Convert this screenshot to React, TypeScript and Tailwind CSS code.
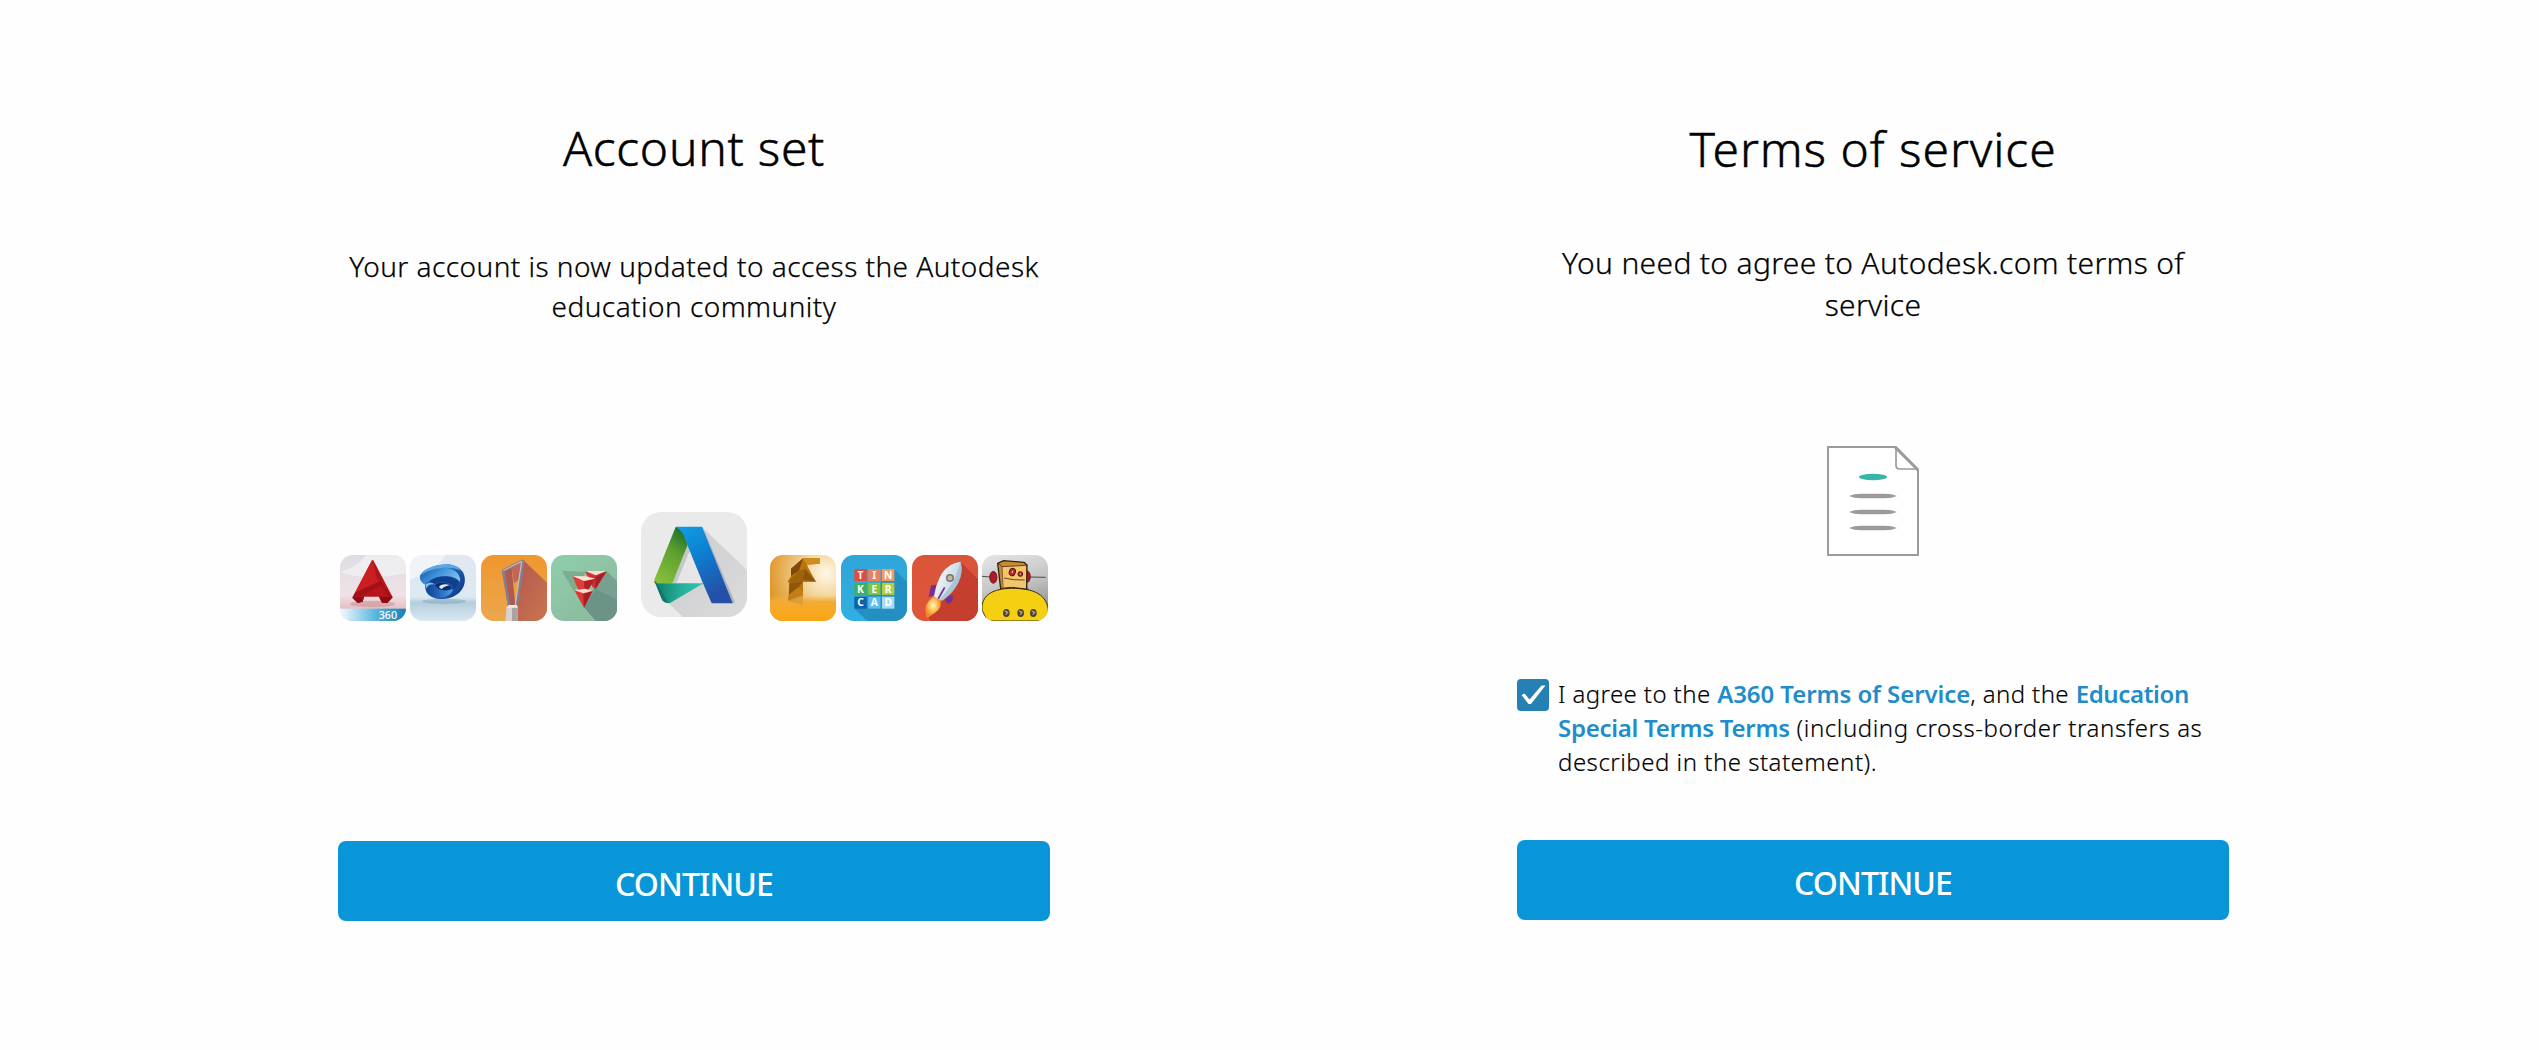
import type { ReactNode } from "react";

function Tile({ id, x, children }: { id: string; x: number; children: ReactNode }) {
  return (
    <svg className="h-[66px] w-[66px] shrink-0" viewBox={`${x} 165 198 198`} aria-hidden="true">
      <clipPath id={`${id}-clip`}>
        <rect x={x} y="165" width="198" height="198" rx="38" />
      </clipPath>
      <g clipPath={`url(#${id}-clip)`}>{children}</g>
    </svg>
  );
}

function Autocad360() {
  return (
    <Tile id="acad" x={31}>
      <defs>
        <linearGradient id="acad-bg" x1="0" y1="0" x2="0" y2="1">
          <stop offset="0" stopColor="#dddde4" />
          <stop offset="0.6" stopColor="#f0e2e6" />
          <stop offset="0.85" stopColor="#e3b9bf" />
        </linearGradient>
        <linearGradient id="acad-bar" x1="0" x2="1">
          <stop offset="0" stopColor="#f4fafd" />
          <stop offset="0.55" stopColor="#55b5dc" />
          <stop offset="1" stopColor="#1580b8" />
        </linearGradient>
      </defs>
      <rect x="31" y="165" width="198" height="198" fill="url(#acad-bg)" />
      <path d="M31 215Q100 245 229 220V165H110Q80 205 31 215Z" fill="#f6f6f9" opacity=".6" />
      <ellipse cx="129" cy="312" rx="68" ry="10" fill="#c9848c" opacity=".5" />
      <path d="M127 181L68 293L84 309L99 305L103 290H148L157 308L173 309L189 292L131 181Z" fill="#b8141b" />
      <path d="M127 181L76 278L153 243L129 181Z" fill="#c91f22" />
      <path d="M153 243L76 278L68 293L100 286L158 254Z" fill="#a50f17" />
      <path d="M68 293L84 309L99 305L103 290ZM148 290L157 308L173 309L189 292Z" fill="#8d0b12" />
      <path d="M129 181L153 243L189 292L175 291L140 230Z" fill="#9c0f16" opacity=".6" />
      <rect x="31" y="326" width="198" height="37" fill="url(#acad-bar)" />
      <text x="147" y="356" fontSize="31" fontFamily="Noto Sans, sans-serif" fontWeight="500" fill="#fff" textLength="55" lengthAdjust="spacingAndGlyphs">360</text>
    </Tile>
  );
}

function Swirl() {
  return (
    <Tile id="swirl" x={243}>
      <defs>
        <linearGradient id="swirl-bg" x1="0" y1="0" x2="0" y2="1">
          <stop offset="0" stopColor="#e2e7f0" />
          <stop offset="0.64" stopColor="#dce9f3" />
          <stop offset="0.72" stopColor="#b5cedd" />
          <stop offset="1" stopColor="#d9e8f1" />
        </linearGradient>
        <linearGradient id="swirl-rim" x1="0" y1="0" x2="1" y2="0.6">
          <stop offset="0" stopColor="#2f7fd0" />
          <stop offset="0.5" stopColor="#2a6fc2" />
          <stop offset="1" stopColor="#123f8c" />
        </linearGradient>
        <linearGradient id="swirl-lobe" x1="0" x2="1">
          <stop offset="0" stopColor="#0f3f8e" />
          <stop offset="0.5" stopColor="#2468bd" />
          <stop offset="1" stopColor="#4f9de0" />
        </linearGradient>
        <linearGradient id="swirl-in" x1="0" y1="0" x2="1" y2="0.5">
          <stop offset="0" stopColor="#15509f" />
          <stop offset="0.5" stopColor="#3f92dc" />
          <stop offset="1" stopColor="#7dc0ef" />
        </linearGradient>
      </defs>
      <rect x="243" y="165" width="198" height="198" fill="url(#swirl-bg)" />
      <path d="M243 165H350Q320 210 243 240Z" fill="#fff" opacity=".5" />
      <ellipse cx="345" cy="304" rx="66" ry="8" fill="#7fa5c0" opacity=".5" />
      <path d="M274 226C286 202 330 192 360 193C394 198 412 220 407 248C402 280 366 299 334 297C304 295 286 280 289 254C276 247 271 237 274 226Z" fill="url(#swirl-rim)" />
      <path d="M274 226C290 204 332 198 364 206C386 213 396 230 393 246C378 228 346 224 318 233C304 237 294 244 289 254C276 247 271 237 274 226Z" fill="url(#swirl-in)" />
      <path d="M274 226C286 202 330 192 360 193C376 195 390 202 398 212C364 196 308 202 274 226Z" fill="#5aa8e6" />
      <path d="M302 243C326 226 362 226 384 240C390 250 384 262 372 268C376 250 346 240 318 252C312 250 306 248 302 243Z" fill="#103f8b" />
      <path d="M289 254C296 244 314 244 324 258C328 268 346 274 372 268C368 286 344 296 326 294C302 292 288 276 289 254Z" fill="url(#swirl-lobe)" />
      <path d="M318 256C328 246 352 246 364 257C368 263 364 269 354 271C338 272 326 268 318 256Z" fill="#0a2f70" />
      <path d="M330 260C338 252 352 251 362 256C352 257 344 261 338 267C334 265 331 263 330 260Z" fill="#dcecf9" />
      <path d="M289 254C296 246 310 246 319 254C308 251 296 254 292 266Z" fill="#7dbdf0" />
    </Tile>
  );
}

function Loop() {
  return (
    <Tile id="loop" x={453}>
      <defs>
        <linearGradient id="loop-bg" x1="0" y1="0" x2="0" y2="1">
          <stop offset="0" stopColor="#f0972f" />
          <stop offset="1" stopColor="#eba74e" />
        </linearGradient>
        <linearGradient id="loop-sh" x1="0" y1="0" x2="1" y2="1">
          <stop offset="0" stopColor="#b4554e" />
          <stop offset="1" stopColor="#c9764f" />
        </linearGradient>
      </defs>
      <rect x="453" y="165" width="198" height="198" fill="url(#loop-bg)" />
      <path d="M580 180L651 248V363H550L552 310Z" fill="url(#loop-sh)" />
      <path d="M522 213L545 202L560 300L556 330L540 320Z" fill="#ad5b52" />
      <path d="M545 202L576 186L556 318Z" fill="#ee9f3d" />
      <path d="M545 202L552 250L568 238L576 186Z" fill="#c2665a" />
      <path d="M520 211L576 183Q581 182 580 188L559 322H538L520 216Z" fill="none" stroke="#857d88" strokeWidth="8" strokeLinejoin="round" />
      <path d="M519 212L575 184L555 320" fill="none" stroke="#c3bfc6" strokeWidth="3.5" strokeLinejoin="round" />
      <path d="M530 320H563V363H526Z" fill="#d6d2cf" />
      <path d="M546 320H563V363H546Z" fill="#aaa3a3" />
      <path d="M536 315H561L563 323H530Z" fill="#eeeae4" />
    </Tile>
  );
}

function Wedges() {
  return (
    <Tile id="wedge" x={665}>
      <defs>
        <linearGradient id="wedge-bg" x1="0" y1="0" x2="0.8" y2="1">
          <stop offset="0" stopColor="#8fcfab" />
          <stop offset="1" stopColor="#8bb99e" />
        </linearGradient>
      </defs>
      <rect x="665" y="165" width="198" height="198" fill="url(#wedge-bg)" />
      <path d="M832 214L863 244V363H800L763 322L790 270Z" fill="#76a08f" />
      <path d="M697 212L770 216L735 275Z" fill="#7eac93" />
      <path d="M800 268L863 300V363H800L765 322Z" fill="#668b7e" opacity=".6" />
      <path d="M767 213L832 214L800 266L790 262Z" fill="#d5302f" />
      <path d="M799 230L832 214L797 268Z" fill="#a91f25" />
      <path d="M767 213L832 213L799 226Z" fill="#f4dfcd" />
      <path d="M730 229L798 236L765 284L752 282Z" fill="#df3e38" />
      <path d="M764 244L798 236L766 286Z" fill="#ae2127" />
      <path d="M730 228L770 229L798 236L764 243Z" fill="#f7e5d4" />
      <path d="M735 271L790 272L764 323Z" fill="#de3733" />
      <path d="M762 282L790 272L764 323Z" fill="#a81e25" />
      <path d="M735 271L766 266L792 272L762 280Z" fill="#f5decb" />
    </Tile>
  );
}

function AutodeskMark() {
  return (
    <svg className="mr-[23px] mb-1 ml-6 h-[105px] w-[106px] shrink-0" viewBox="64 37 318 315" aria-hidden="true">
      <defs>
        <clipPath id="mark-clip">
          <rect x="64" y="37" width="318" height="315" rx="60" />
        </clipPath>
        <linearGradient id="mark-blue" x1="0" y1="0" x2="0.4" y2="1">
          <stop offset="0" stopColor="#139ee0" />
          <stop offset="0.45" stopColor="#0c80d2" />
          <stop offset="1" stopColor="#2450a8" />
        </linearGradient>
        <linearGradient id="mark-green" x1="0.75" y1="0" x2="0.3" y2="1">
          <stop offset="0" stopColor="#1d6d2f" />
          <stop offset="0.4" stopColor="#5c9f2e" />
          <stop offset="1" stopColor="#84be3a" />
        </linearGradient>
        <linearGradient id="mark-teal" x1="0" x2="1">
          <stop offset="0" stopColor="#117a6a" />
          <stop offset="0.5" stopColor="#22ac98" />
          <stop offset="1" stopColor="#3bc4b5" />
        </linearGradient>
        <linearGradient id="mark-shade" x1="0" y1="0" x2="1" y2="1">
          <stop offset="0" stopColor="#c9cacc" />
          <stop offset="1" stopColor="#dcdcdd" />
        </linearGradient>
      </defs>
      <g clipPath="url(#mark-clip)">
        <rect x="64" y="37" width="318" height="315" fill="#eaeaeb" />
        <path d="M247 83L382 210V352H190L148 312L245 254Z" fill="url(#mark-shade)" />
        <path d="M205 133L246 250H160Z" fill="#e6e6e7" />
        <path d="M205 133L210 155L170 250H158Z" fill="#c6c7c8" />
        <path d="M249 83L346 308L336 312L243 88Z" fill="#aeb4bd" />
        <path d="M168 82H186L204 136L158 251H104V240Z" fill="url(#mark-green)" />
        <path d="M168 81H247L339 311H276Q244 238 204 138Q192 92 168 81Z" fill="url(#mark-blue)" />
        <path d="M104 243L112 251H252L150 311Q132 311 126 298Z" fill="url(#mark-teal)" />
        <path d="M104 243L112 251L146 310Q132 310 126 298Z" fill="#0c6b62" opacity=".6" />
      </g>
    </svg>
  );
}

function Formit() {
  return (
    <Tile id="form" x={61}>
      <defs>
        <radialGradient id="form-bg" cx="0.85" cy="0.28" r="0.95">
          <stop offset="0" stopColor="#fff8e8" />
          <stop offset="0.35" stopColor="#f4d8a0" />
          <stop offset="1" stopColor="#dc8f1c" />
        </radialGradient>
        <linearGradient id="form-floor" x1="0" y1="0" x2="0" y2="1">
          <stop offset="0" stopColor="#f5b645" stopOpacity="0" />
          <stop offset="0.25" stopColor="#f2ab32" />
          <stop offset="1" stopColor="#fba614" />
        </linearGradient>
      </defs>
      <rect x="61" y="165" width="198" height="198" fill="url(#form-bg)" />
      <rect x="61" y="286" width="198" height="77" fill="url(#form-floor)" />
      <path d="M160 175L124 206V228L114 246L119 248L116 302L160 313V246L199 245L176 204L172 194L210 191V174Z" fill="#b87511" />
      <path d="M160 175L124 206V228L148 212Z" fill="#7c4b08" />
      <path d="M160 175L210 174V191L172 194Z" fill="#d08e1f" />
      <path d="M148 212L114 246H160L166 206Z" fill="#a0620b" />
      <path d="M166 206L160 240L199 245Z" fill="#8d550a" />
      <path d="M160 246L119 248L118 284L146 262Z" fill="#8f5809" />
      <path d="M118 284L146 262L160 276V292L116 302Z" fill="#c47e17" />
      <path d="M116 302L160 286V313Z" fill="#dc9e3c" />
    </Tile>
  );
}

const tinker: [string, string][] = [
  ["T", "#e14b40"],
  ["I", "#ee7f5c"],
  ["N", "#f29a62"],
  ["K", "#3fae5f"],
  ["E", "#84c441"],
  ["R", "#b3cf3f"],
  ["C", "#0d62ae"],
  ["A", "#5ebdec"],
  ["D", "#a5dcf5"],
];

function Tinkercad() {
  return (
    <Tile id="tink" x={273}>
      <defs>
        <linearGradient id="tink-bg" x1="0" y1="0" x2="0" y2="1">
          <stop offset="0" stopColor="#2fa5d8" />
          <stop offset="1" stopColor="#2fb0e2" />
        </linearGradient>
      </defs>
      <rect x="273" y="165" width="198" height="198" fill="url(#tink-bg)" />
      <path d="M432 207L471 246V363H353L313 326Z" fill="#2490c2" />
      {tinker.map(([letter, fill], i) => {
        const x = 313 + (i % 3) * 41.5;
        const y = 207 + Math.floor(i / 3) * 41.5;
        return (
          <g key={letter}>
            <rect x={x} y={y} width="37" height="36" fill={fill} />
            <text x={x + 18.5} y={y + 29} textAnchor="middle" fontSize="31" fontWeight="700" fontFamily="Noto Sans, sans-serif" fill="#fff">
              {letter}
            </text>
          </g>
        );
      })}
    </Tile>
  );
}

function Rocket() {
  return (
    <Tile id="rocket" x={484}>
      <defs>
        <linearGradient id="rocket-bg" x1="0" y1="0" x2="0" y2="1">
          <stop offset="0" stopColor="#d9553a" />
          <stop offset="1" stopColor="#e0553a" />
        </linearGradient>
        <linearGradient id="rocket-body" x1="0" y1="0" x2="1" y2="0.6">
          <stop offset="0.2" stopColor="#f6fafd" />
          <stop offset="1" stopColor="#b4cddc" />
        </linearGradient>
        <radialGradient id="rocket-fire" cx="0.5" cy="0.4">
          <stop offset="0" stopColor="#fff6cf" />
          <stop offset="0.5" stopColor="#fdc75a" />
          <stop offset="1" stopColor="#f58a2a" />
        </radialGradient>
      </defs>
      <rect x="484" y="165" width="198" height="198" fill="url(#rocket-bg)" />
      <path d="M630 186L682 238V363H540L530 346L590 280Z" fill="#c43f2e" />
      <path d="M541 256L558 254L553 284L534 292Z" fill="#76308f" />
      <path d="M588 290L607 286L606 302L592 313L583 302Z" fill="#76308f" />
      <path d="M548 290Q522 310 524 332Q525 348 530 355Q544 344 556 336Q574 324 570 300Z" fill="url(#rocket-fire)" />
      <path d="M630 185Q594 189 574 220Q556 250 550 290L574 302Q608 280 624 246Q638 214 630 185Z" fill="url(#rocket-body)" />
      <path d="M630 185Q638 214 624 246Q608 280 574 302L566 298Q600 264 614 232Q624 204 630 185Z" fill="#8db0c6" opacity=".5" />
      <circle cx="598" cy="234" r="12" fill="#7b6f78" />
      <circle cx="598" cy="234" r="7.5" fill="#c4b99b" />
      <path d="M581 264L564 294" stroke="#76308f" strokeWidth="5" strokeLinecap="round" />
    </Tile>
  );
}

function Robot() {
  return (
    <Tile id="robot" x={696}>
      <defs>
        <linearGradient id="robot-bg" x1="0.2" y1="0" x2="0.5" y2="1">
          <stop offset="0" stopColor="#e3e3e3" />
          <stop offset="0.5" stopColor="#c4c4c4" />
          <stop offset="1" stopColor="#8a8a8a" />
        </linearGradient>
      </defs>
      <rect x="696" y="165" width="198" height="198" fill="url(#robot-bg)" />
      <path d="M696 229L722 231M836 231L887 232" stroke="#333" strokeWidth="2.5" />
      <ellipse cx="730" cy="232" rx="11" ry="18" fill="#b4162b" stroke="#4a1016" strokeWidth="2" />
      <ellipse cx="832" cy="230" rx="9" ry="17" fill="#b4162b" stroke="#4a1016" strokeWidth="2" />
      <path d="M743 190L761 182L822 187L831 195L830 270L752 266Z" fill="#c98b32" stroke="#2e2212" strokeWidth="4" strokeLinejoin="round" />
      <path d="M756 200L828 196L828 270H758Z" fill="#f3c56c" />
      <path d="M745 190L756 200L829 196" fill="none" stroke="#4d3414" strokeWidth="2.5" />
      <path d="M756 200L759 262" fill="none" stroke="#6b4716" strokeWidth="2.5" />
      <path d="M696 318C700 286 726 266 785 265C850 265 894 282 896 340L892 363H712L696 330Z" fill="#f5cf12" stroke="#3d3110" strokeWidth="3" />
      <path d="M755 265L785 262L836 268" stroke="#2e2212" strokeWidth="3" fill="none" />
      <ellipse cx="787" cy="216" rx="9" ry="11" fill="#c4282a" stroke="#501515" strokeWidth="3" transform="rotate(20 787 216)" />
      <ellipse cx="811" cy="222" rx="7" ry="7" fill="#c4282a" stroke="#501515" strokeWidth="3" />
      <path d="M788 213l-2 6M811 220v4" stroke="#f4d9c0" strokeWidth="3" />
      <path d="M762 234Q788 241 824 240" fill="none" stroke="#4a3012" strokeWidth="2.5" />
      {[769, 812, 850].map((cx) => (
        <g key={cx}>
          <ellipse cx={cx} cy="339" rx="10" ry="12" fill="#4b432f" />
          <path d={`M${cx - 5} 333l9 4l-6 7`} fill="none" stroke="#b3aa92" strokeWidth="4" />
        </g>
      ))}
    </Tile>
  );
}

function DocumentIcon() {
  return (
    <svg className="mx-auto mt-[120px] h-[110px] w-[92px]" viewBox="81 48 276 330" aria-hidden="true">
      <path d="M84 51H287L354 119V375H84Z" fill="#fff" stroke="#9b9b9b" strokeWidth="6" />
      <path d="M288 53V106Q288 117 299 117H352" fill="none" stroke="#9b9b9b" strokeWidth="5" />
      <path d="M285 51L354 120" stroke="#9b9b9b" strokeWidth="9" />
      <ellipse cx="219" cy="141" rx="42" ry="9.5" fill="#35b5a6" />
      {[198, 246, 294].map((cy) => (
        <path key={cy} d={`M147 ${cy}Q162 ${cy - 7} 182 ${cy - 7}H256Q276 ${cy - 7} 291 ${cy}Q276 ${cy + 7} 256 ${cy + 7}H182Q162 ${cy + 7} 147 ${cy}Z`} fill="#9b9b9b" />
      ))}
    </svg>
  );
}

function ContinueButton({ className }: { className: string }) {
  return (
    <button className={`flex h-20 w-full items-center justify-center rounded-lg bg-[#0896d9] pt-[5px] text-[32px] leading-none font-medium tracking-[-0.9px] text-white ${className}`}>
      CONTINUE
    </button>
  );
}

export default function App() {
  return (
    <main className="flex h-[1050px] w-[2539px] gap-[467px] overflow-hidden bg-[#fefefe] pl-[338px] font-['Noto_Sans',sans-serif] text-black">
      <section className="w-[712px] pt-[118px]">
        <h1 className="text-center text-[48px] leading-[60px] font-light tracking-[0.7px] [-webkit-text-stroke:0.5px_black]">Account set</h1>
        <p className="mt-[68px] text-center text-[28px] leading-10 font-light tracking-[0.45px] whitespace-nowrap [-webkit-text-stroke:0.25px_black]">
          Your account is now updated to access the Autodesk
          <br />
          education community
        </p>
        <div className="mt-[186px] flex h-[109px] items-end pl-0.5">
          <div className="flex gap-[4.4px]">
            <Autocad360 />
            <Swirl />
            <Loop />
            <Wedges />
          </div>
          <AutodeskMark />
          <div className="flex gap-[4.7px]">
            <Formit />
            <Tinkercad />
            <Rocket />
            <Robot />
          </div>
        </div>
        <ContinueButton className="mt-[220px]" />
      </section>

      <section className="w-[712px] pt-[119px]">
        <h1 className="text-center text-[48px] leading-[60px] font-light tracking-[0.95px] [-webkit-text-stroke:0.5px_black]">Terms of service</h1>
        <p className="mt-[63px] text-center text-[30px] leading-[42px] font-light tracking-[0.33px] whitespace-nowrap [-webkit-text-stroke:0.25px_black]">
          You need to agree to Autodesk.com terms of
          <br />
          service
        </p>
        <DocumentIcon />
        <div className="mt-[121px] flex h-[102px] gap-[9px]">
          <span role="checkbox" aria-checked="true" className="mt-[2px] flex h-8 w-8 shrink-0 items-center justify-center rounded bg-[#2580b3]">
            <svg className="h-8 w-8" viewBox="0 0 32 32" aria-hidden="true">
              <path d="M4.5 16L7.5 14.5L12.5 20.5L24.5 6.5L28.5 6.5L14 25H11.5Z" fill="#fff" />
            </svg>
          </span>
          <p className="text-[24px] leading-[34px] font-light tracking-[0.56px] whitespace-nowrap">
            <span className="tracking-[0.4px] [-webkit-text-stroke:0.15px_black]">I agree to the </span>
            <a className="font-semibold tracking-[-0.08px] text-[#1f8dc9]">A360 Terms of Service</a>
            <span className="tracking-[0.4px] [-webkit-text-stroke:0.15px_black]">, and the </span>
            <a className="font-semibold tracking-[-0.35px] text-[#1f8dc9]">Education</a>
            <br />
            <a className="font-semibold tracking-[-0.28px] text-[#1f8dc9]">Special Terms Terms</a>
            <span className="[-webkit-text-stroke:0.15px_black]"> (including cross-border transfers as</span>
            <br />
            <span className="tracking-[0.5px] [-webkit-text-stroke:0.15px_black]">described in the statement).</span>
          </p>
        </div>
        <ContinueButton className="mt-[61px]" />
      </section>
    </main>
  );
}
